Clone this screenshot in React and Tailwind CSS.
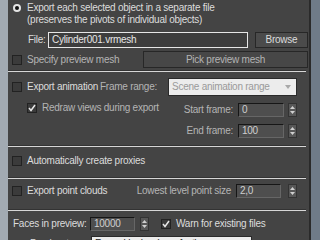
import React from "react";

const font = { fontFamily: '"Liberation Sans", Arial, sans-serif' };

const Check = ({ checked, className = "" }) => (
	<div className={`w-[10px] h-[10px] shrink-0 bg-[#3b3b3b] border border-[#222] flex items-center justify-center ${className}`}>
		{checked && (
			<svg width="8" height="8" viewBox="0 0 8 8">
				<path d="M1 4 L3 6.5 L7 1" fill="none" stroke="#e8e8e8" strokeWidth="1.5" />
			</svg>
		)}
	</div>
);

const Spinner = ({ className = "" }) => (
	<div className={`w-[9px] h-[14px] shrink-0 bg-[#575757] border border-[#333] flex flex-col items-center justify-center gap-[2px] ${className}`}>
		<svg width="5" height="3" viewBox="0 0 5 3">
			<path d="M0 3 L2.5 0 L5 3 Z" fill="#d0d0d0" />
		</svg>
		<svg width="5" height="3" viewBox="0 0 5 3">
			<path d="M0 0 L2.5 3 L5 0 Z" fill="#d0d0d0" />
		</svg>
	</div>
);

const NumInput = ({ value, className = "" }) => (
	<div className={`h-[14px] bg-[#4e4e4e] border-t border-l border-[#161616] border-r border-b border-r-[#666] border-b-[#666] pl-[3px] flex items-center text-[#cfcfcf] ${className}`}>
		{value}
	</div>
);

const Separator = ({ className = "" }) => (
	<div className={`mr-[3px] ${className}`}>
		<div className="h-[1px] bg-[#333]" />
		<div className="h-[1px] bg-[#d6d6d6]" />
	</div>
);

export default function App() {
	return (
		<div
			className="w-[320px] h-[240px] overflow-hidden flex bg-[#444] text-[10px] tracking-[-0.25px] text-[#dcdcdc] leading-[12px]"
			style={font}
		>
			<div className="w-[8px] shrink-0 bg-[#a2aab2]" />

			<div className="flex-1 flex flex-col">
				{/* export each */}
				<div className="pt-[2px] flex items-center h-[14px]">
					<div className="ml-[5px] w-[8px] h-[8px] rounded-full bg-[#e4e4e4] flex items-center justify-center">
						<div className="w-[4px] h-[4px] rounded-full bg-[#111]" />
					</div>
					<span className="ml-[6px]">Export each selected object in a separate file</span>
				</div>
				<div className="pl-[19px] h-[12px]">(preserves the pivots of individual objects)</div>

				<div className="mt-[6px] h-[16px] flex items-center">
					<span className="pl-[20px] w-[40px]">File:</span>
					<div className="w-[200px] h-[16px] border border-[#e6e6e6] bg-[#3d3d3d] flex items-center pl-[3px] text-[#e6e6e6]">
						Cylinder001.vrmesh
					</div>
					<div className="ml-[7px] w-[53px] h-[16px] bg-[#4b4b4b] border border-[#272727] flex items-center justify-center">
						Browse
					</div>
				</div>

				<div className="mt-[3px] h-[17px] flex items-center">
					<Check className="ml-[4px]" />
					<span className="ml-[5px] text-[#b4b4b4]">Specify preview mesh</span>
					<div className="ml-auto mr-[1px] w-[165px] h-[17px] bg-[#474747] border border-[#272727] flex items-center justify-center text-[#b4b4b4]">
						Pick preview mesh
					</div>
				</div>

				<Separator className="mt-[2px]" />

				{/* animation */}
				<div className="mt-[6px] h-[18px] flex items-center">
					<div className="w-[92px] flex items-center">
						<Check className="ml-[4px]" />
						<span className="ml-[5px]">Export animation</span>
					</div>
					<span className="w-[68px] text-[#b4b4b4]">Frame range:</span>
					<div className="w-[129px] h-[18px] bg-[#ececec] border border-[#2a2a2a] flex items-center pl-[3px] pr-[5px] text-[#9a9a9a]">
						<span className="flex-1">Scene animation range</span>
						<svg width="6" height="4" viewBox="0 0 6 4">
							<path d="M0 0 L3 4 L6 0 Z" fill="#a8a8a8" />
						</svg>
					</div>
				</div>

				<div className="mt-[7px] h-[14px] flex items-center justify-between pr-[12px]">
					<div className="flex items-center pl-[19px] mb-[4px]">
						<Check checked />
						<span className="ml-[5px] text-[#b4b4b4]">Redraw views during export</span>
					</div>
					<div className="flex items-center">
						<span className="text-[#b4b4b4]">Start frame:</span>
						<NumInput value="0" className="ml-[5px] w-[46px]" />
						<Spinner className="ml-[4px]" />
					</div>
				</div>

				<div className="mt-[7px] h-[14px] flex items-center justify-end pr-[12px]">
					<span className="text-[#b4b4b4]">End frame:</span>
					<NumInput value="100" className="ml-[5px] w-[46px]" />
					<Spinner className="ml-[4px]" />
				</div>

				<Separator className="mt-[7px]" />

				{/* proxies */}
				<div className="mt-[8px] h-[12px] flex items-center">
					<Check className="ml-[4px]" />
					<span className="ml-[5px]">Automatically create proxies</span>
				</div>

				<Separator className="mt-[10px]" />

				{/* point clouds */}
				<div className="mt-[5px] h-[14px] flex items-center justify-between pr-[12px]">
					<div className="flex items-center">
						<Check className="ml-[4px]" />
						<span className="ml-[5px]">Export point clouds</span>
					</div>
					<div className="flex items-center">
						<span className="text-[#b4b4b4]">Lowest level point size</span>
						<NumInput value="2,0" className="ml-[5px] w-[45px]" />
						<Spinner className="ml-[7px]" />
					</div>
				</div>

				<Separator className="mt-[11px]" />

				{/* preview */}
				<div className="mt-[6px] h-[14px] flex items-center">
					<span className="pl-[5px] w-[82px]">Faces in preview:</span>
					<NumInput value="10000" className="w-[45px]" />
					<Spinner className="ml-[5px]" />
					<Check checked className="ml-[12px]" />
					<span className="ml-[5px]">Warn for existing files</span>
				</div>

				<div className="mt-[5px] h-[16px] flex items-center">
					<span className="pl-[22px] w-[83px]">Preview type:</span>
					<div className="w-[161px] h-[16px] bg-[#ececec] border border-[#2a2a2a] flex items-center pl-[3px] text-[#222]">
						Face skipping (very fast)
					</div>
				</div>
			</div>

			<div className="w-[2px] shrink-0 bg-[#2a2a2a]" />
			<div className="w-[9px] shrink-0 bg-[#6f7b88]" />
		</div>
	);
}
